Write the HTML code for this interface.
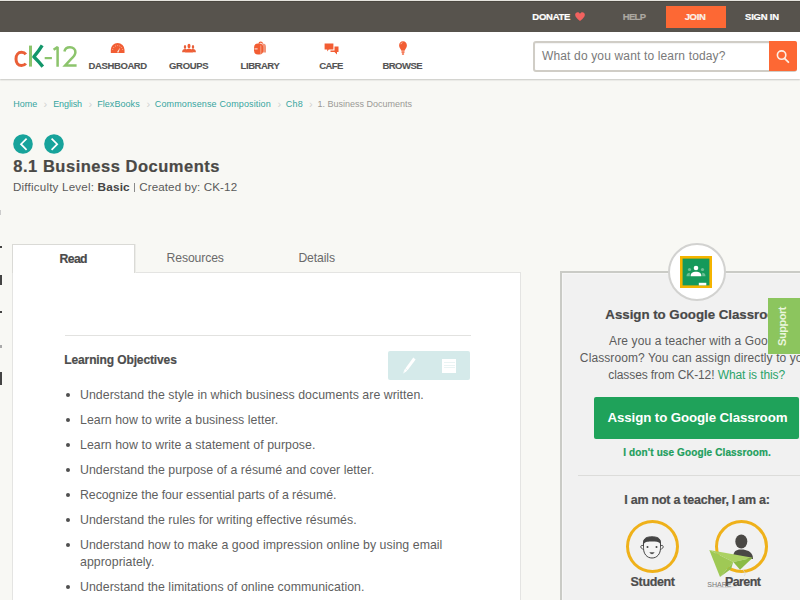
<!DOCTYPE html>
<html><head><meta charset="utf-8">
<style>
*{margin:0;padding:0;box-sizing:border-box}
html,body{width:800px;height:600px;overflow:hidden}
body{background:#f8f8f4;font-family:"Liberation Sans",sans-serif;position:relative;color:#4b4b4b}
.a{position:absolute;white-space:nowrap;line-height:1}
.hv{-webkit-text-stroke:0.2px currentColor}
#topbar{position:absolute;left:0;top:0;width:800px;height:32px;background:#57534d}
#header{position:absolute;left:0;top:32px;width:800px;height:47px;background:#fff;box-shadow:0 1px 1.5px rgba(0,0,0,.2)}
.tb{font-weight:bold;font-size:9.5px;color:#fff;top:11.7px;-webkit-text-stroke:0.2px currentColor}
.nav{font-weight:bold;font-size:9.5px;color:#545454;top:61px;-webkit-text-stroke:0.12px #545454}
.bc{font-size:9px;color:#36a5a0;top:100.2px}
.sep{font-size:11px;color:#d2d2d0;top:98.6px}
.li{font-size:12.35px;color:#5f5f5f;left:80px;letter-spacing:0.035px}
.dot{position:absolute;left:66.2px;width:4px;height:4px;border-radius:50%;background:#505050}
.rp{font-size:12px;color:#5c5c5c}
</style></head><body>
<div id="topbar"></div>
<div class="a" style="left:0;top:0;width:800px;height:1px;background:#e6e4de"></div>
<div class="a" style="left:0;top:1px;width:800px;height:1px;background:#4b4740"></div>
<div id="header"></div>

<!-- left edge marks -->
<div class="a" style="left:0;top:210px;width:1px;height:5px;background:#ccc"></div>
<div class="a" style="left:0;top:246px;width:2px;height:2px;background:#444"></div>
<div class="a" style="left:0;top:275px;width:2px;height:10px;background:#444"></div>
<div class="a" style="left:0;top:311px;width:2px;height:2px;background:#444"></div>
<div class="a" style="left:0;top:345px;width:2px;height:3px;background:#aaa"></div>
<div class="a" style="left:0;top:372px;width:2px;height:13px;background:#444"></div>

<!-- top bar items -->
<div class="a tb" style="left:532.3px;letter-spacing:-0.25px">DONATE</div>
<svg class="a" style="left:574.6px;top:12.4px" width="10" height="9.2" viewBox="0 0 12 11"><path d="M6 10.8 C2 7.8 0.2 5.6 0.2 3.4 C0.2 1.5 1.6 0.2 3.2 0.2 C4.5 0.2 5.4 1 6 2 C6.6 1 7.5 0.2 8.8 0.2 C10.4 0.2 11.8 1.5 11.8 3.4 C11.8 5.6 10 7.8 6 10.8Z" fill="#f2625f"/></svg>
<div class="a tb" style="left:622.8px;color:#aca8a1;letter-spacing:-0.7px">HELP</div>
<div class="a" style="left:665.7px;top:5.6px;width:60px;height:22.4px;background:#fd6834"></div>
<div class="a tb" style="left:684.7px;letter-spacing:-0.35px;color:#fbf2ea">JOIN</div>
<div class="a tb" style="left:745px;letter-spacing:-0.2px">SIGN IN</div>

<!-- logo -->
<svg class="a" style="left:0;top:32px" width="90" height="46" viewBox="0 0 90 46">
  <path d="M25.8 22.3 C24.8 20.8 23.3 20.3 21.5 20.3 C18.2 20.3 16 22.9 16 26.9 C16 30.9 18.2 33.5 21.5 33.5 C23.3 33.5 24.8 33 25.8 31.5" fill="none" stroke="#ea5f37" stroke-width="3"/>
  <rect x="29" y="13.6" width="3" height="21" fill="#8cc46c"/>
  <path d="M42.2 13.4 Q38.5 19.5 33.8 24.8 Q38.8 29.6 42.8 34.6" fill="none" stroke="#12966a" stroke-width="3.3" stroke-linejoin="round"/>
  <rect x="44.7" y="25" width="7.2" height="2.2" fill="#8cc46c"/>
  <path d="M53.6 17.8 L57.6 15 L57.6 34.8" fill="none" stroke="#8cc46c" stroke-width="2.5" stroke-linejoin="bevel"/>
  <path d="M64.4 19.6 C65 16.6 67.4 15.3 70 15.3 C73.2 15.3 75.4 17.4 75.4 20.3 C75.4 23 73.6 24.8 71 27.2 L65.2 33.4 L76.6 33.4" fill="none" stroke="#8cc46c" stroke-width="2.5"/>
</svg>

<!-- nav icons -->
<svg class="a" style="left:110px;top:42px" width="16" height="12" viewBox="0 0 16 12"><path d="M0.8 11 V7.8 A6.85 6.85 0 0 1 14.5 7.8 V11 Z" fill="#f25d33"/><path d="M2.6 8 A5.1 5.1 0 0 1 12.7 8" fill="none" stroke="#fbd3c2" stroke-width="0.7" stroke-dasharray="1.1 1.1"/><path d="M6.9 10.2 L10.2 5.6 L8.6 10.6Z" fill="#fde6da"/></svg>
<svg class="a" style="left:181px;top:43px" width="16" height="11" viewBox="0 0 16 11"><ellipse cx="4" cy="3.9" rx="1.2" ry="1.9" fill="#e8603a"/><path d="M1.1 9.2 C1.1 6.8 2.2 6 4 6 C5 6 5.6 6.3 5.6 6.3 L4.6 9.2Z" fill="#e8603a"/><ellipse cx="12" cy="3.9" rx="1.2" ry="1.9" fill="#e8603a"/><path d="M14.9 9.2 C14.9 6.8 13.8 6 12 6 C11 6 10.4 6.3 10.4 6.3 L11.4 9.2Z" fill="#e8603a"/><ellipse cx="8" cy="3.1" rx="1.5" ry="2.3" fill="#f25d33"/><path d="M4.2 9.6 C4.2 6.8 5.6 5.8 8 5.8 C10.4 5.8 11.8 6.8 11.8 9.6Z" fill="#f25d33"/></svg>
<svg class="a" style="left:253px;top:41px" width="14" height="15" viewBox="0 0 14 15"><path d="M6 2.8 C6 0.6 9.4 0.6 9.4 2.8" fill="none" stroke="#f25d33" stroke-width="1.1"/><path d="M9.4 2.4 C12 2.4 13 3.5 13 6 L13 11.6 L9.4 11.6Z" fill="#f2957a"/><rect x="1" y="2.6" width="9.2" height="10.9" rx="4" fill="#f25d33"/><path d="M1.5 7.9 H4.6" stroke="#fff" stroke-width="0.9"/><path d="M7.8 4.4 V13.4" stroke="#f8c0a8" stroke-width="0.7"/></svg>
<svg class="a" style="left:324px;top:43px" width="15" height="12" viewBox="0 0 15 12"><path d="M0.6 0.6 H9.4 V6.6 H4.8 L3.2 8.4 V6.6 H0.6Z" fill="#f25d33"/><path d="M10.5 3.5 H14.5 V9 H13 V11.5 L10.5 9 H6.5 V7.5 H10.5Z" fill="#f25d33"/></svg>
<svg class="a" style="left:397.5px;top:41px" width="10" height="15" viewBox="0 0 10 15"><path d="M5 0.3 C7.3 0.3 8.9 2.1 8.9 4.5 C8.9 6.7 7.2 7.9 6.6 9.8 H3.4 C2.8 7.9 1.1 6.7 1.1 4.5 C1.1 2.1 2.7 0.3 5 0.3Z" fill="#f25d33"/><rect x="3.5" y="10.3" width="3" height="1.5" fill="#f25d33"/><rect x="3.8" y="12.2" width="2.4" height="1.6" rx="0.8" fill="#f25d33"/><path d="M2.8 3.2 C3.1 2.2 3.8 1.7 4.4 1.6" stroke="#fbd0bc" stroke-width="0.8" fill="none"/></svg>

<!-- nav -->
<div class="a nav" style="left:88.5px;letter-spacing:-0.38px">DASHBOARD</div>
<div class="a nav" style="left:169px;letter-spacing:-0.3px">GROUPS</div>
<div class="a nav" style="left:240.6px;letter-spacing:-0.45px">LIBRARY</div>
<div class="a nav" style="left:319.2px;letter-spacing:-0.6px">CAFE</div>
<div class="a nav" style="left:382.4px;letter-spacing:-0.5px">BROWSE</div>

<!-- search -->
<div class="a" style="left:533.4px;top:41px;width:264px;height:30.5px;border:2px solid #d0cdc6;border-radius:3px;background:#fff;box-shadow:inset 0 1px 1px rgba(0,0,0,.05)"></div>
<div class="a" style="left:769px;top:41.4px;width:28px;height:29.6px;background:#fd6834;border-radius:0 2px 2px 0"></div>
<svg class="a" style="left:774px;top:48px" width="16" height="16" viewBox="0 0 16 16"><circle cx="7.6" cy="7.1" r="4.2" fill="none" stroke="#fdeee4" stroke-width="1.6"/><path d="M10.5 10.3 L14.4 14.2" stroke="#fdeee4" stroke-width="1.8" stroke-linecap="round"/></svg>
<div class="a" style="left:542px;top:49.8px;font-size:12px;color:#7a7a7a;letter-spacing:0.15px">What do you want to learn today?</div>

<!-- breadcrumb -->
<div class="a bc" style="left:13.2px">Home</div>
<div class="a sep" style="left:43.5px">&#8250;</div>
<div class="a bc" style="left:53.2px;letter-spacing:-0.1px">English</div>
<div class="a sep" style="left:88.5px">&#8250;</div>
<div class="a bc" style="left:97.2px;letter-spacing:0.06px">FlexBooks</div>
<div class="a sep" style="left:146.5px">&#8250;</div>
<div class="a bc" style="left:154.8px;letter-spacing:0.13px">Commonsense Composition</div>
<div class="a sep" style="left:277.5px">&#8250;</div>
<div class="a bc" style="left:285.8px;letter-spacing:0.2px">Ch8</div>
<div class="a sep" style="left:309px">&#8250;</div>
<div class="a bc" style="left:317.5px;color:#9a9a96">1. Business Documents</div>

<!-- arrows -->
<svg class="a" style="left:13.2px;top:134px" width="20" height="20" viewBox="0 0 20 20"><circle cx="10" cy="10" r="9.8" fill="#17a39b"/><path d="M13.6 4.6 L8 10.2 L13.6 15.8" fill="none" stroke="#fff" stroke-width="1.7"/></svg>
<svg class="a" style="left:43.5px;top:134px" width="20" height="20" viewBox="0 0 20 20"><circle cx="10" cy="10" r="9.8" fill="#17a39b"/><path d="M7.6 4.6 L13.2 10.2 L7.6 15.8" fill="none" stroke="#fff" stroke-width="1.7"/></svg>

<div class="a hv" style="left:13.3px;top:157.6px;font-size:16.5px;font-weight:bold;color:#4a4946;letter-spacing:0.52px">8.1 Business Documents</div>
<div class="a" style="left:13px;top:181.1px;font-size:11.6px;color:#5a5a5a"><span style="letter-spacing:0.2px">Difficulty Level: </span><b style="color:#444;font-size:11.8px;letter-spacing:0.15px">Basic</b> <span style="display:inline-block;width:1.2px;height:9.5px;background:#8a8a8a;vertical-align:-1px;margin:0 0.5px 0 1.2px"></span> <span style="letter-spacing:0.12px">Created by: CK-12</span></div>

<!-- content panel -->
<div class="a" style="left:12.4px;top:271.5px;width:509px;height:340px;background:#fff;border:1px solid #e4e4e2"></div>
<div class="a" style="left:12px;top:244px;width:123px;height:29px;background:#fff;border:1px solid #dadad6;border-bottom:none;box-shadow:1px 0 0 #ececE8"></div>
<div class="a hv" style="left:59.5px;top:253px;font-size:12.2px;font-weight:bold;color:#4a4a4a;letter-spacing:-0.6px">Read</div>
<div class="a" style="left:166.6px;top:251.7px;font-size:12.2px;color:#6a6a6a;letter-spacing:-0.12px">Resources</div>
<div class="a" style="left:298.4px;top:251.7px;font-size:12.2px;color:#6a6a6a;letter-spacing:-0.1px">Details</div>

<div class="a" style="left:64.5px;top:335px;width:406px;height:1px;background:#e2e2e0"></div>
<div class="a hv" style="left:64.3px;top:353.6px;font-size:12px;font-weight:bold;color:#4d4d4d;letter-spacing:-0.12px">Learning Objectives</div>

<!-- toolbar -->
<div class="a" style="left:387.7px;top:351px;width:82px;height:28.5px;background:#d5eaea;border-radius:2px"></div>
<svg class="a" style="left:401px;top:356px" width="16" height="19" viewBox="0 0 16 19"><path d="M12.3 1.6 L14.6 3.4 L6.6 14.2 L4.3 12.4Z" fill="#fff"/><path d="M4.1 12.8 L6.3 14.6 L5.2 15.6 L2.2 17.6 L3.2 14.2Z" fill="#fff"/><path d="M3.4 14.8 L2.2 17.6" stroke="#e6f2f2" stroke-width="0.5"/></svg>
<div class="a" style="left:442.3px;top:358.5px;width:14px;height:14.3px;background:#fff"></div>
<div class="a" style="left:444px;top:361px;width:10.5px;height:9px;background:repeating-linear-gradient(#fff 0 1.5px,#eaf4f4 1.5px 2.5px)"></div>

<!-- list -->
<div class="dot" style="top:392.7px"></div><div class="a li" style="top:388.6px">Understand the style in which business documents are written.</div>
<div class="dot" style="top:417.7px"></div><div class="a li" style="top:413.6px">Learn how to write a business letter.</div>
<div class="dot" style="top:442.7px"></div><div class="a li" style="top:438.6px">Learn how to write a statement of purpose.</div>
<div class="dot" style="top:467.7px"></div><div class="a li" style="top:463.6px">Understand the purpose of a résumé and cover letter.</div>
<div class="dot" style="top:492.7px"></div><div class="a li" style="top:488.6px;letter-spacing:-0.05px">Recognize the four essential parts of a résumé.</div>
<div class="dot" style="top:517.7px"></div><div class="a li" style="top:513.6px">Understand the rules for writing effective résumés.</div>
<div class="dot" style="top:542.7px"></div><div class="a li" style="top:538.6px">Understand how to make a good impression online by using email</div>
<div class="a li" style="top:555.7px">appropriately.</div>
<div class="dot" style="top:584.7px"></div><div class="a li" style="top:580.7px">Understand the limitations of online communication.</div>

<!-- right panel -->
<div class="a" style="left:560px;top:271px;width:280px;height:340px;background:#f1f1f1;border:2px solid #cacbc6;box-shadow:inset 1px 1px 0 #f6f6f6"></div>
<div class="a" style="left:667.5px;top:243px;width:58px;height:58px;border-radius:50%;background:#fff;border:2px solid #d2d2d0"></div>
<svg class="a" style="left:680px;top:256px" width="32" height="32" viewBox="0 0 32 32">
  <rect x="0" y="0" width="32" height="32" fill="#f5b400"/>
  <rect x="2.6" y="2.6" width="26.8" height="26.8" fill="#15995a"/>
  <circle cx="16" cy="12" r="2.3" fill="#fff"/>
  <path d="M10.6 20.2 C10.6 16.8 13 15.8 16 15.8 C19 15.8 21.4 16.8 21.4 20.2Z" fill="#fff"/>
  <circle cx="9.5" cy="13.5" r="1.6" fill="#6cc096"/><circle cx="22.5" cy="13.5" r="1.6" fill="#6cc096"/>
  <path d="M6.5 20.2 C6.5 17.6 8 16.8 9.8 16.8 L9.8 20.2Z M25.5 20.2 C25.5 17.6 24 16.8 22.2 16.8 L22.2 20.2Z" fill="#6cc096"/>
  <rect x="18.8" y="26.8" width="7.5" height="2.6" fill="#fff"/>
</svg>
<div class="a hv" style="left:605.3px;top:308.1px;font-size:13.3px;font-weight:bold;color:#484848;letter-spacing:-0.02px">Assign to Google Classroom</div>
<div class="a rp" style="left:561.7px;width:270px;text-align:center;top:335.1px;letter-spacing:0.12px">Are you a teacher with a Google</div>
<div class="a rp" style="left:561.7px;width:270px;text-align:center;top:352px;letter-spacing:0.1px">Classroom? You can assign directly to your</div>
<div class="a rp" style="left:561.7px;width:270px;text-align:center;top:368.8px;letter-spacing:-0.1px">classes from CK-12! <span style="color:#2aa36a">What is this?</span></div>

<div class="a" style="left:594.3px;top:396.8px;width:205px;height:41.8px;background:#1fa25a;border-radius:2px"></div>
<div class="a" style="left:607.5px;top:411.3px;font-size:13.3px;font-weight:bold;color:#fff;letter-spacing:-0.1px">Assign to Google Classroom</div>
<div class="a hv" style="left:623.3px;top:447.6px;font-size:10px;font-weight:bold;color:#219e5c;letter-spacing:0.12px">I don't use Google Classroom.</div>

<div class="a" style="left:578px;top:475px;width:240px;height:1px;background:#dcdcda"></div>
<div class="a hv" style="left:624.3px;top:493.7px;font-size:12.5px;font-weight:bold;color:#4d4d4d;letter-spacing:-0.25px">I am not a teacher, I am a:</div>

<div class="a" style="left:625.6px;top:520px;width:53.2px;height:53px;border-radius:50%;border:3px solid #efb11a"></div>
<div class="a" style="left:715px;top:520.2px;width:53px;height:53px;border-radius:50%;border:3px solid #efb11a"></div>

<!-- student face -->
<svg class="a" style="left:638px;top:534px" width="28" height="26" viewBox="0 0 28 26">
  <path d="M5.5 9 C5.5 4 9 2.8 14 2.8 C19 2.8 22.5 4 22.5 9 L22.5 14 C22.5 20 19 24 14 24 C9 24 5.5 20 5.5 14Z" fill="#f4f4f4" stroke="#444" stroke-width="1"/>
  <path d="M5 11.5 C4.5 5.5 7.5 2.8 14 2.8 C20.5 2.8 23.5 5.5 23 11.5 C22 9 21 8.2 19 7.8 C16 7.2 11.5 7.4 9 7.8 C7 8.2 5.8 9.5 5 11.5Z" fill="#444"/>
  <path d="M5 11.5 C3 10.8 2.2 12.5 3.2 14 C4 15 5 15 5.3 15" fill="#f4f4f4" stroke="#444" stroke-width="0.9"/>
  <path d="M23 11.5 C25 10.8 25.8 12.5 24.8 14 C24 15 23 15 22.7 15" fill="#f4f4f4" stroke="#444" stroke-width="0.9"/>
  <circle cx="9.5" cy="13" r="1" fill="#444"/><circle cx="18.5" cy="13" r="1" fill="#444"/>
  <path d="M11.3 18.3 Q14 22 16.7 18.3Z" fill="#555"/>
</svg>
<!-- parent silhouette -->
<svg class="a" style="left:731px;top:534px" width="24" height="26" viewBox="0 0 24 26">
  <ellipse cx="10.3" cy="7.5" rx="6" ry="7" fill="#4a4845"/>
  <path d="M2 25 C2 18 4 16.5 8 15.5 L12.5 15.5 C17 16.5 22 18 22 25Z" fill="#4a4845"/>
</svg>
<div class="a hv" style="left:630.6px;top:576px;font-size:12.5px;font-weight:bold;color:#4d4d4d;letter-spacing:-0.35px">Student</div>

<!-- paper plane -->
<svg class="a" style="left:700px;top:545px" width="60" height="45" viewBox="0 0 60 45">
  <path d="M9.3 5 L52.7 12.7 L33.3 17 Z" fill="#acd264"/>
  <path d="M9.3 5 L33.3 17 L20 32 Z" fill="#9fc955"/>
  <path d="M33.3 17 L52.7 12.7 L40 24.7 Z" fill="#8bbb44"/>
  <path d="M20 32 L33.3 17 L31 24 Z" fill="#93c04b"/>
  <path d="M43 25 C45 27 46 29 44 31 M10 41 C20 43 30 43 37 41" fill="none" stroke="#d6d6d6" stroke-width="0.8"/>
</svg>
<div class="a" style="left:707.3px;top:581px;font-size:7px;color:#777">SHARE</div>
<div class="a hv" style="left:725px;top:576px;font-size:12.5px;font-weight:bold;color:#4d4d4d;letter-spacing:-0.6px">Parent</div>

<!-- support tab -->
<div class="a" style="left:768px;top:298.3px;width:32px;height:55.4px;background:#8cc55e"></div>
<div class="a" style="left:777.3px;top:346px;font-size:11px;font-weight:bold;color:#e9f5dc;letter-spacing:-0.45px;transform:rotate(-90deg);transform-origin:0 0">Support</div>

</body></html>
